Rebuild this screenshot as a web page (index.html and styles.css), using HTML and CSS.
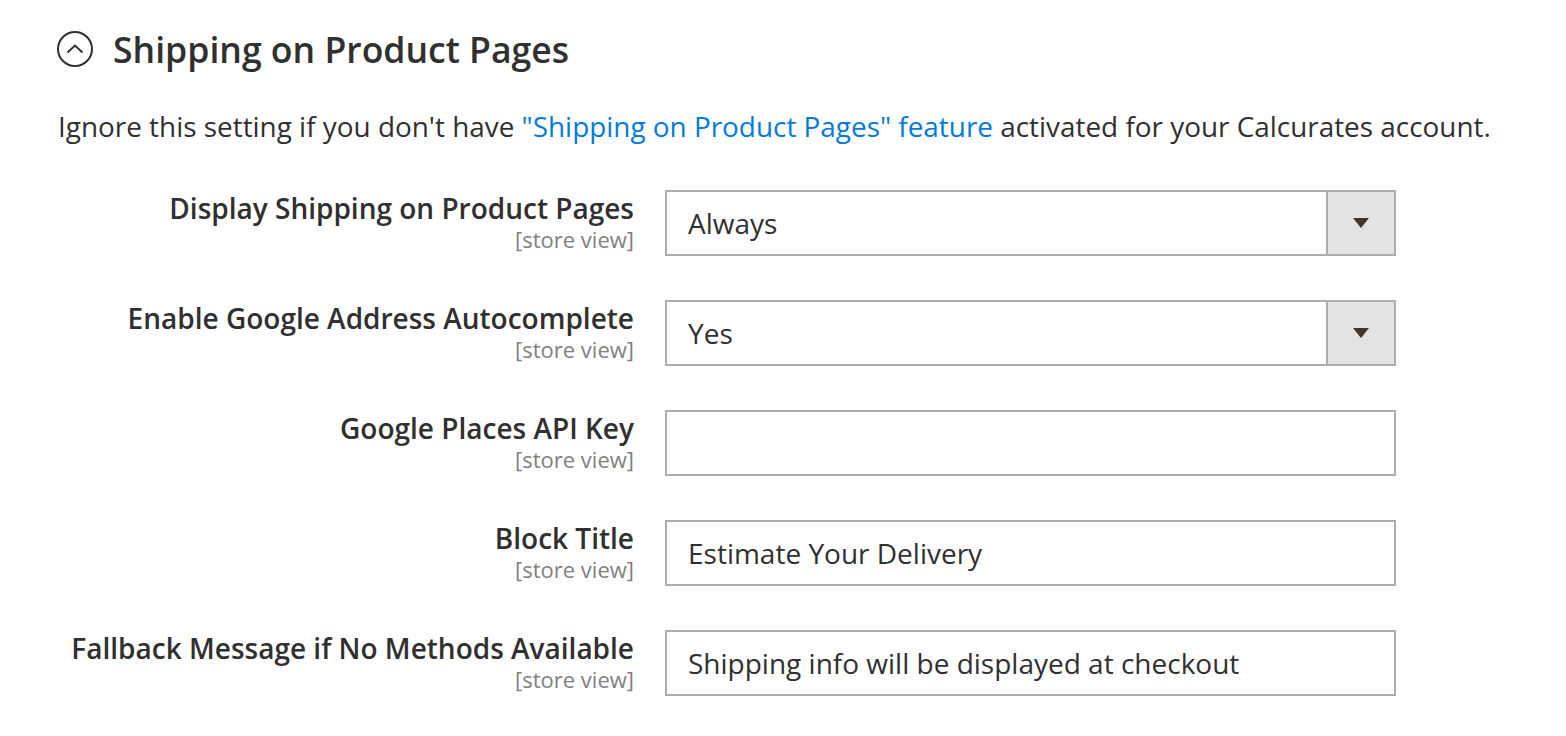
FILE: index.html
```html
<!DOCTYPE html>
<html lang="en">
<head>
<meta charset="utf-8">
<title>Shipping on Product Pages</title>
<link rel="stylesheet" href="styles.css">
</head>
<body>
<div class="section">
  <div class="section-head">
    <svg class="toggle" width="36" height="36" viewBox="0 0 36 36" aria-hidden="true">
      <circle cx="18" cy="18" r="17" fill="none" stroke="#303030" stroke-width="2"/>
      <path d="M10.5 21.5 L18 14.5 L25.5 21.5" fill="none" stroke="#303030" stroke-width="2"/>
    </svg>
    <h2 class="section-title">Shipping on Product Pages</h2>
  </div>
  <p class="section-note">Ignore this setting if you don't have <a href="#" class="link">"Shipping on Product Pages" feature</a> activated for your Calcurates account.</p>
</div>
<div class="form">
  <div class="label"><div class="label-text">Display Shipping on Product Pages</div><div class="scope">[store view]</div></div>
  <div class="control select"><span class="value">Always</span><span class="select-btn"><span class="arrow"></span></span></div>

  <div class="label"><div class="label-text">Enable Google Address Autocomplete</div><div class="scope">[store view]</div></div>
  <div class="control select"><span class="value">Yes</span><span class="select-btn"><span class="arrow"></span></span></div>

  <div class="label"><div class="label-text">Google Places API Key</div><div class="scope">[store view]</div></div>
  <div class="control"><span class="value"></span></div>

  <div class="label"><div class="label-text">Block Title</div><div class="scope">[store view]</div></div>
  <div class="control"><span class="value">Estimate Your Delivery</span></div>

  <div class="label"><div class="label-text">Fallback Message if No Methods Available</div><div class="scope">[store view]</div></div>
  <div class="control"><span class="value">Shipping info will be displayed at checkout</span></div>
</div>
</body>
</html>
```
FILE: styles.css
```css
html, body {
  margin: 0;
  padding: 0;
  background: #ffffff;
}
body {
  font-family: "Open Sans", "Liberation Sans", sans-serif;
  color: #303030;
}
.section {
  padding: 31px 0 0 57px;
}
.section-head {
  display: flex;
  align-items: center;
  gap: 20px;
  height: 36px;
}
.toggle {
  display: block;
  flex: none;
}
.section-title {
  margin: 0;
  font-size: 35.6px;
  font-weight: 600;
  line-height: 36px;
  color: #303030;
}
.section-note {
  margin: 39px 0 0 1px;
  font-size: 27.9px;
  line-height: 40px;
}
.link {
  color: #007bdb;
  text-decoration: none;
}
.form {
  display: grid;
  grid-template-columns: 634px 731px;
  column-gap: 31px;
  row-gap: 44px;
  margin-top: 44px;
}
.label {
  text-align: right;
  padding-top: 1px;
}
.label-text {
  font-size: 28px;
  font-weight: 600;
  line-height: 34px;
}
.scope {
  font-size: 22px;
  line-height: 28px;
  color: #808080;
}
.control {
  box-sizing: border-box;
  height: 66px;
  border: 2px solid #adadad;
  background: #ffffff;
  display: flex;
  align-items: center;
  font-size: 28px;
  padding-left: 21px;
}
.value {
  flex: 1;
  white-space: nowrap;
}
.select-btn {
  flex: none;
  align-self: stretch;
  width: 66px;
  background: #e3e3e3;
  border-left: 2px solid #adadad;
  display: flex;
  align-items: center;
  justify-content: center;
}
.arrow {
  width: 0;
  height: 0;
  border-left: 8px solid transparent;
  border-right: 8px solid transparent;
  border-top: 10px solid #41362f;
}
```
